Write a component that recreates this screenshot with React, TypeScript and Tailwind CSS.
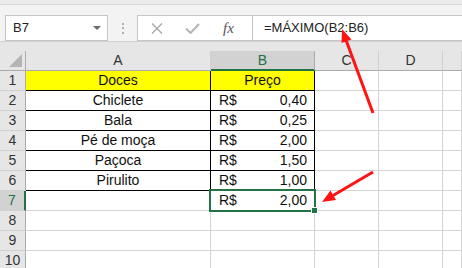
import React from "react";

const GREEN = "#217346";

const ROWS: { a: string; v?: string; head?: boolean }[] = [
  { a: "Doces", head: true },
  { a: "Chiclete", v: "0,40" },
  { a: "Bala", v: "0,25" },
  { a: "Pé de moça", v: "2,00" },
  { a: "Paçoca", v: "1,50" },
  { a: "Pirulito", v: "1,00" },
];

const CELL = "h-[20px] shrink-0 border-r border-b border-[#d4d4d4] text-[14px] leading-[19px] text-[#111]";

function FormulaBar() {
  return (
    <div className="h-[37px] bg-[#f3f3f3] border-b border-[#d0d0d0] pt-[10px] flex items-start">
      <div className="ml-[5px] w-[103px] h-[26px] bg-white border border-[#c6c6c6] flex items-center justify-between pl-[7px] pr-[6px]">
        <span className="text-[13px] text-[#222]">B7</span>
        <svg width="8" height="4" viewBox="0 0 8 4">
          <path d="M0 0 H8 L4 4 Z" fill="#6b6b6b" />
        </svg>
      </div>
      <div className="w-[29px] h-[26px] flex flex-col items-center justify-center gap-[2.5px]">
        <span className="w-[2px] h-[2px] bg-[#b0b0b0]" />
        <span className="w-[2px] h-[2px] bg-[#b0b0b0]" />
        <span className="w-[2px] h-[2px] bg-[#b0b0b0]" />
      </div>
      <div className="w-[115px] h-[26px] bg-white border border-[#c6c6c6] border-r-0 flex items-center">
        <svg className="ml-[13px]" width="12" height="11" viewBox="0 0 12 11">
          <path d="M1 0.5 L11 10.5 M11 0.5 L1 10.5" stroke="#a8a8a8" strokeWidth="1.3" />
        </svg>
        <svg className="ml-[22px]" width="15" height="11" viewBox="0 0 15 11">
          <path d="M1 5.5 L5.5 10 L14 1" stroke="#b4b4b4" strokeWidth="2" fill="none" />
        </svg>
        <span className="ml-[23px] text-[15px] italic text-[#555] [font-family:'Liberation_Serif',serif]">fx</span>
      </div>
      <div className="flex-1 h-[26px] bg-white border border-[#c6c6c6] border-r-0 flex items-center pl-[11px]">
        <span className="text-[13px] text-[#222]">=MÁXIMO(B2:B6)</span>
      </div>
    </div>
  );
}

function HeaderRow() {
  const cols = [
    { l: "A", w: "w-[185px]" },
    { l: "B", w: "w-[104px]", sel: true },
    { l: "C", w: "w-[64px]" },
    { l: "D", w: "w-[64px]" },
    { l: "", w: "flex-1" },
  ];
  return (
    <div className="flex h-[20px]">
      <div className="w-[26px] h-[20px] shrink-0 bg-[#e6e6e6] border-r border-b border-[#ababab] flex items-end justify-end pr-[3px] pb-[3px]">
        <svg width="13" height="13" viewBox="0 0 13 13">
          <path d="M13 0 V13 H0 Z" fill="#b4b4b4" />
        </svg>
      </div>
      {cols.map((c) => (
        <div
          key={c.l + c.w}
          className={
            c.sel
              ? `${c.w} h-[20px] shrink-0 bg-[#d2d2d2] border-r border-[#ababab] border-b-2 border-b-[#217346] text-[14px] leading-[19px] text-center text-[#217346]`
              : `${c.w} h-[20px] shrink-0 bg-[#e6e6e6] border-r border-r-[#d0d0d0] border-b border-b-[#ababab] text-[14px] leading-[19px] text-center text-[#333]`
          }
        >
          {c.l}
        </div>
      ))}
    </div>
  );
}

function RowHead({ n, sel }: { n: number; sel?: boolean }) {
  return (
    <div
      className={
        sel
          ? "w-[26px] h-[20px] shrink-0 bg-[#d2d2d2] border-r-2 border-[#217346] border-b border-b-[#d0d0d0] text-center text-[14px] leading-[19px] text-[#217346]"
          : "w-[26px] h-[20px] shrink-0 bg-[#e6e6e6] border-r border-[#ababab] border-b border-b-[#d0d0d0] text-center text-[14px] leading-[19px] text-[#333]"
      }
    >
      {n}
    </div>
  );
}

function EmptyTail() {
  return (
    <>
      <div className={`${CELL} w-[64px]`} />
      <div className={`${CELL} w-[64px]`} />
      <div className={`${CELL} flex-1`} />
    </>
  );
}

export default function App() {
  return (
    <div className="relative w-[462px] h-[268px] overflow-hidden bg-white [font-family:'Liberation_Sans',Arial,sans-serif]">
      <div className="h-[5px] bg-[#ececec] border-b border-[#d6d6d6]" />
      <FormulaBar />
      <div className="h-[9px] bg-[#e6e6e6]" />
      <HeaderRow />

      {ROWS.map((r, i) => (
        <div key={r.a} className="flex">
          <RowHead n={i + 1} />
          <div
            className={`${CELL} w-[185px] border-r-black border-b-black text-center ${r.head ? "bg-[#ffff00]" : ""}`}
          >
            {r.a}
          </div>
          {r.head ? (
            <div className={`${CELL} w-[104px] border-r-black border-b-black text-center bg-[#ffff00]`}>Preço</div>
          ) : (
            <div className={`${CELL} w-[104px] border-r-black border-b-black flex justify-between pl-[8px] pr-[7px]`}>
              <span>R$</span>
              <span>{r.v}</span>
            </div>
          )}
          <EmptyTail />
        </div>
      ))}

      <div className="flex">
        <RowHead n={7} sel />
        <div className={`${CELL} w-[185px]`} />
        <div className={`${CELL} w-[104px] relative flex justify-between pl-[8px] pr-[7px]`}>
          <span>R$</span>
          <span>2,00</span>
          <div className="absolute left-[-2px] top-[-2px] w-[107px] h-[23px] border-2 border-[#217346]" />
          <div className="absolute left-[100px] top-[16px] w-[7px] h-[7px] bg-[#217346] border border-white" />
        </div>
        <EmptyTail />
      </div>

      {[8, 9, 10].map((n) => (
        <div key={n} className="flex">
          <RowHead n={n} />
          <div className={`${CELL} w-[185px]`} />
          <div className={`${CELL} w-[104px]`} />
          <EmptyTail />
        </div>
      ))}

      <svg className="absolute inset-0 pointer-events-none" width="462" height="268" viewBox="0 0 462 268">
        <line x1="373" y1="113" x2="346" y2="40" stroke="#ff1414" strokeWidth="3" />
        <path d="M342 29 L351.5 39.5 L341.5 43 Z" fill="#ff1414" />
        <line x1="373" y1="172" x2="333" y2="195.5" stroke="#ff1414" strokeWidth="3" />
        <path d="M322 202 L336 200 L330.5 190.5 Z" fill="#ff1414" />
      </svg>
    </div>
  );
}
